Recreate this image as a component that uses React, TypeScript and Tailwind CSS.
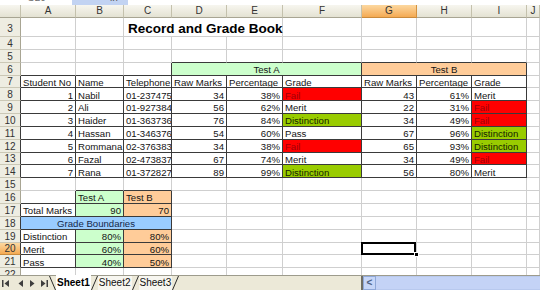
import React from 'react'

type Spec = {
  c: number
  span?: number
  t?: string
  a?: 'l' | 'r' | 'c'
  bg?: string
  fg?: string
  title?: boolean
}

const COLS = ['A', 'B', 'C', 'D', 'E', 'F', 'G', 'H', 'I', 'J']

const students: [number, string, string, number, string, string, number, string, string][] = [
  [1, 'Nabil', '01-237475', 34, '38%', 'Fail', 43, '61%', 'Merit'],
  [2, 'Ali', '01-927384', 56, '62%', 'Merit', 22, '31%', 'Fail'],
  [3, 'Haider', '01-363736', 76, '84%', 'Distinction', 34, '49%', 'Fail'],
  [4, 'Hassan', '01-346376', 54, '60%', 'Pass', 67, '96%', 'Distinction'],
  [5, 'Rommana', '02-376383', 34, '38%', 'Fail', 65, '93%', 'Distinction'],
  [6, 'Fazal', '02-473837', 67, '74%', 'Merit', 34, '49%', 'Fail'],
  [7, 'Rana', '01-372827', 89, '99%', 'Distinction', 56, '80%', 'Merit'],
]

const GREEN = 'bg-[#ccffcc]'
const ORANGE = 'bg-[#ffcc99]'

function grade(c: number, g: string): Spec {
  if (g === 'Fail') return { c, t: g, bg: 'bg-[#ff0000]', fg: 'text-[#a00008]' }
  if (g === 'Distinction') return { c, t: g, bg: 'bg-[#99cc00]', fg: 'text-[#142200]' }
  return { c, t: g }
}

const ROWS: Record<number, Spec[]> = {
  3: [{ c: 3, span: 3, t: 'Record and Grade Book', title: true }],
  6: [
    { c: 4, span: 3, t: 'Test A', a: 'c', bg: GREEN },
    { c: 7, span: 3, t: 'Test B', a: 'c', bg: ORANGE },
  ],
  7: ['Student No', 'Name', 'Telephone', 'Raw Marks', 'Percentage', 'Grade', 'Raw Marks', 'Percentage', 'Grade'].map(
    (t, i) => ({ c: i + 1, t }),
  ),
  16: [
    { c: 2, t: 'Test A', bg: GREEN },
    { c: 3, t: 'Test B', bg: ORANGE },
  ],
  17: [
    { c: 1, t: 'Total Marks' },
    { c: 2, t: '90', a: 'r', bg: GREEN },
    { c: 3, t: '70', a: 'r', bg: ORANGE },
  ],
  18: [{ c: 1, span: 3, t: 'Grade Boundaries', a: 'c', bg: 'bg-[#99ccff]', fg: 'text-[#14284a]' }],
  19: [
    { c: 1, t: 'Distinction' },
    { c: 2, t: '80%', a: 'r', bg: GREEN },
    { c: 3, t: '80%', a: 'r', bg: ORANGE },
  ],
  20: [
    { c: 1, t: 'Merit' },
    { c: 2, t: '60%', a: 'r', bg: GREEN },
    { c: 3, t: '60%', a: 'r', bg: ORANGE },
  ],
  21: [
    { c: 1, t: 'Pass' },
    { c: 2, t: '40%', a: 'r', bg: GREEN },
    { c: 3, t: '50%', a: 'r', bg: ORANGE },
  ],
}

students.forEach((s, i) => {
  ROWS[8 + i] = [
    { c: 1, t: String(s[0]), a: 'r' },
    { c: 2, t: s[1] },
    { c: 3, t: s[2] },
    { c: 4, t: String(s[3]), a: 'r' },
    { c: 5, t: s[4], a: 'r' },
    grade(6, s[5]),
    { c: 7, t: String(s[6]), a: 'r' },
    { c: 8, t: s[7], a: 'r' },
    grade(9, s[8]),
  ]
})

// cells that carry the dark table border
function isB(r: number, c: number) {
  if (r === 6) return c >= 4 && c <= 9
  if (r >= 7 && r <= 14) return c >= 1 && c <= 9
  if (r === 16) return c === 2 || c === 3
  if (r >= 17 && r <= 21) return c >= 1 && c <= 3
  return false
}

function buildRow(r: number): Spec[] {
  const specs = ROWS[r] ?? []
  const out: Spec[] = []
  let c = 1
  while (c <= 10) {
    const s = specs.find((x) => x.c === c)
    if (s) {
      out.push(s)
      c += s.span ?? 1
    } else {
      out.push({ c })
      c++
    }
  }
  return out
}

function Cell({ r, s }: { r: number; s: Spec }) {
  const end = s.c + (s.span ?? 1) - 1
  let darkB = false
  for (let c = s.c; c <= end; c++) if (isB(r, c) || isB(r + 1, c)) darkB = true
  const darkR = isB(r, end) || isB(r, end + 1)
  const span = s.span === 3 ? 'col-span-3' : ''
  const align = s.a === 'r' ? 'justify-end' : s.a === 'c' ? 'justify-center' : 'justify-start'
  const sel = r === 20 && s.c === 7
  return (
    <div
      className={`relative flex items-end border-r border-b whitespace-nowrap ${span} ${align} ${
        s.title ? 'overflow-visible pb-[1px] pl-[4px]' : 'px-[2px]'
      } ${sel || s.title ? '' : 'overflow-hidden'} ${darkR ? 'border-r-[#3a3a3a]' : 'border-r-[#cfcfcf]'} ${
        darkB ? 'border-b-[#3a3a3a]' : 'border-b-[#cfcfcf]'
      } ${s.bg ?? 'bg-white'} ${s.fg ?? 'text-[#141414]'}`}
    >
      {s.title ? (
        <span className="text-[13.5px] font-bold leading-none text-black">{s.t}</span>
      ) : (
        <span className="text-[9.6px] leading-none">{s.t}</span>
      )}
      {sel && (
        <>
          <div className="absolute -top-[1px] -left-[1px] right-0 -bottom-[1px] z-10 border-2 border-black" />
          <div className="absolute -right-[3px] -bottom-[3px] z-20 h-[5px] w-[5px] border border-white bg-black" />
        </>
      )}
    </div>
  )
}

function NavIcon({ dir, bar }: { dir: 'l' | 'r'; bar?: boolean }) {
  return (
    <svg width="8" height="7" viewBox="0 0 8 7" className="text-[#3e3e3e]">
      {dir === 'l' ? (
        <>
          {bar && <rect x="0" y="0" width="1.5" height="7" fill="currentColor" />}
          <path d="M7 0 L7 7 L2.5 3.5 Z" fill="currentColor" />
        </>
      ) : (
        <>
          <path d="M1 0 L1 7 L5.5 3.5 Z" fill="currentColor" />
          {bar && <rect x="6.5" y="0" width="1.5" height="7" fill="currentColor" />}
        </>
      )}
    </svg>
  )
}

function Slant({ back }: { back?: boolean }) {
  return (
    <svg width="7" height="14" viewBox="0 0 7 14" className="shrink-0">
      {back ? (
        <path d="M0.5 0 L6.5 14" stroke="#2a2a2a" strokeWidth="1" fill="none" />
      ) : (
        <path d="M6.5 0 L0.5 14" stroke="#2a2a2a" strokeWidth="1" fill="none" />
      )}
    </svg>
  )
}

export default function App() {
  const rows = Array.from({ length: 20 }, (_, i) => i + 3)
  return (
    <div className="flex h-[290px] w-[540px] flex-col overflow-hidden bg-white font-['Liberation_Sans',Arial,sans-serif]">
      {/* cut-off formula bar */}
      <div className="flex h-[5px] shrink-0 overflow-hidden">
        <div className="w-[72px] overflow-hidden bg-white">
          <span className="-mt-[8px] block pl-[27px] text-[10px] leading-[12px] text-[#6b6b6b]">G20</span>
        </div>
        <div className="flex w-[56px] justify-end overflow-hidden bg-[#c2d3f2] pr-[10px]">
          <span className="-mt-[8px] block text-[10px] italic leading-[12px] text-[#555]">fx</span>
        </div>
        <div className="flex-1 bg-white" />
      </div>

      {/* sheet grid */}
      <div className="h-[270px] shrink-0 overflow-hidden">
        <div className="grid grid-cols-[21px_55px_48px_48px_55px_56px_79px_55px_55px_55px_1fr] grid-rows-[13px_19px_repeat(19,12.85px)]">
          <div className="border-r border-b border-r-[#c4c1ad] border-b-[#a8a593] bg-gradient-to-b from-[#f7f6ef] to-[#e4e2d3]" />
          {COLS.map((c) => (
            <div
              key={c}
              className={`flex items-center justify-center border-r border-b text-[10px] leading-none text-[#333] ${
                c === 'G'
                  ? 'border-r-[#d4923f] border-b-[#c98a3c] bg-gradient-to-b from-[#fcd89f] to-[#f4aa52]'
                  : 'border-r-[#c4c1ad] border-b-[#a8a593] bg-gradient-to-b from-[#f7f6ef] to-[#e4e2d3]'
              }`}
            >
              {c}
            </div>
          ))}
          {rows.map((r) => (
            <React.Fragment key={r}>
              <div
                className={`flex items-end justify-center border-r border-b text-[10px] leading-none text-[#333] ${
                  r === 20
                    ? 'border-b-[#c98a3c] bg-gradient-to-b from-[#fcd89f] to-[#f4aa52]'
                    : 'border-b-[#cbc8b6] bg-[#eeede2]'
                } ${isB(r, 1) ? 'border-r-[#3a3a3a]' : 'border-r-[#a8a593]'} ${r === 3 ? 'pb-[2px]' : ''}`}
              >
                {r}
              </div>
              {buildRow(r).map((s) => (
                <Cell key={s.c} r={r} s={s} />
              ))}
            </React.Fragment>
          ))}
        </div>
      </div>

      {/* sheet tabs + scrollbar */}
      <div className="flex h-[15px] shrink-0 items-stretch border-t border-[#9d9b8c] bg-[#ece9d8]">
        <div className="flex w-[49px] shrink-0 items-center pl-[2px]">
          <div className="w-[13px]">
            <NavIcon dir="l" bar />
          </div>
          <div className="w-[13px] pl-[1px]">
            <NavIcon dir="l" />
          </div>
          <div className="w-[12px] pl-[2px]">
            <NavIcon dir="r" />
          </div>
          <div className="w-[10px] pl-[1px]">
            <NavIcon dir="r" bar />
          </div>
        </div>
        <div className="flex items-stretch">
          <Slant back />
          <div className="-mt-[1px] flex items-center bg-white px-[1px] text-[10px] font-bold leading-none text-black">
            Sheet1
          </div>
          <Slant />
          <div className="flex items-center bg-[#f7f6f0] px-[1px] text-[10px] leading-none text-[#111]">Sheet2</div>
          <Slant />
          <div className="flex items-center bg-[#f7f6f0] px-[1px] text-[10px] leading-none text-[#111]">Sheet3</div>
          <Slant />
        </div>
        <div className="flex-1" />
        <div className="flex w-[179px] shrink-0 items-stretch">
          <div className="w-[2px] bg-[#6f6d64]" />
          <div className="flex w-[13px] items-center justify-center border border-[#8fa8d8] bg-[#c6d6f8] text-[10px] font-bold leading-none text-[#4d6185]">
            &lt;
          </div>
          <div className="flex-1 border-y border-[#b8c9ee] bg-[#c4d3f6]" />
        </div>
      </div>
    </div>
  )
}
